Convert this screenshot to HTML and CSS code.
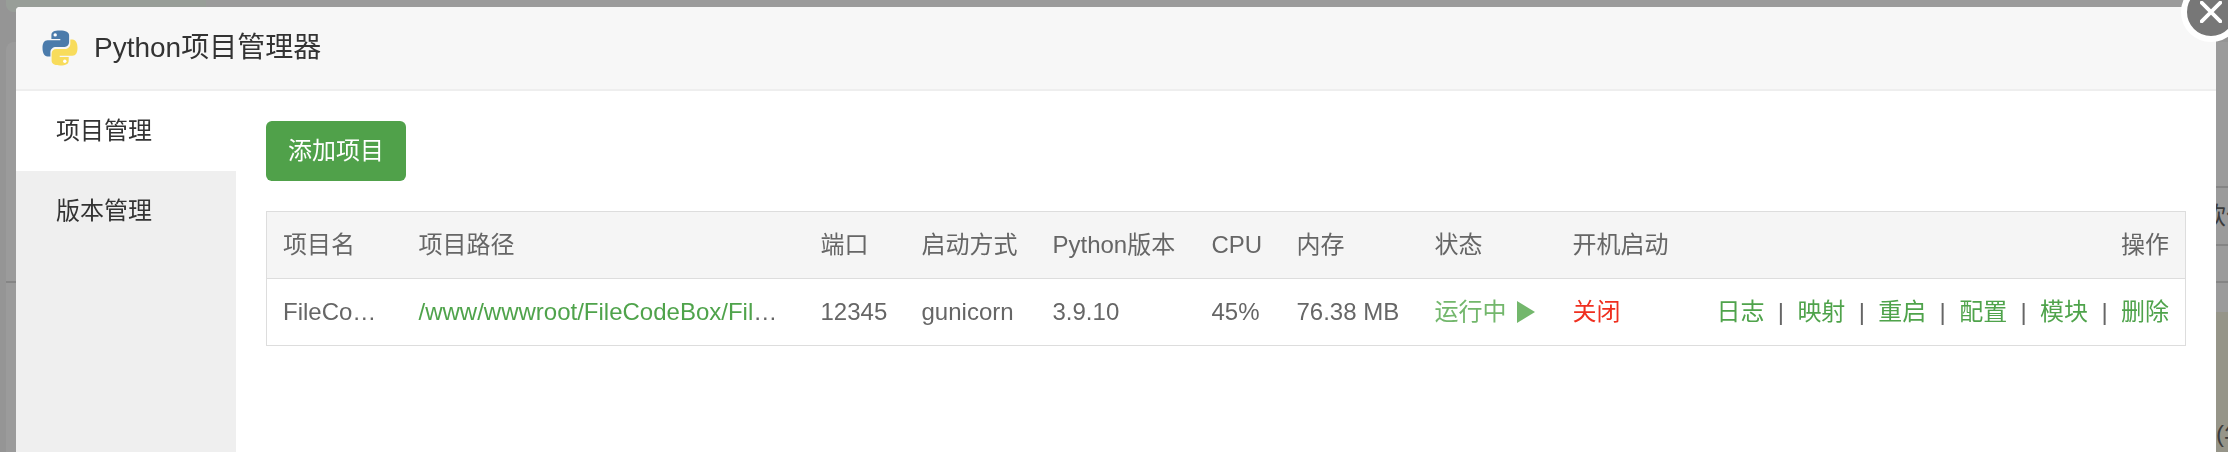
FILE: index.html
```html
<!DOCTYPE html>
<html lang="zh-CN">
<head>
    <meta charset="utf-8">
    <title>Python项目管理器</title>
    <link rel="stylesheet" href="styles.css">
</head>
<body>
    <!-- page behind the mask -->
    <div class="page">
        <div class="search-card"><div class="search-tab"></div></div>
        <div class="soft-card">
            <div class="soft-bar"></div>
            <div class="soft-title">软件</div>
            <div class="soft-gap"></div>
            <div class="soft-head"></div>
            <div class="soft-ad">(年付)</div>
        </div>
    </div>

    <div class="layer" role="dialog" aria-labelledby="layerTitle">
        <div class="layer-title">
            <svg class="logo" viewBox="0 0 36 36" aria-hidden="true">
                <path fill="#4b7bab" d="M17.8 0.6C12 0.6 9.4 2 9.4 5.3V9h8.9v1.3H5.6C2.2 10.3 0.5 13.2 0.5 18s1.7 8.4 5 8.4H8.4V22.2c0-3.3 2.6-5.300 5.700-5.300h8.500c2.600 0 4.500-2 4.500-4.600V5.300C27.100 2.300 24 0.600 17.800 0.600z"/>
                <path fill="#f8dc5c" d="M18.200 35.400c5.800 0 8.500-1.500 8.500-4.700V27h-9v-1.300h12.700c3.400 0 5.100-2.900 5.100-7.700s-1.700-8.400-5-8.400h-2.200v4.200c0 3.200-2.500 5.300-5.600 5.300h-8.500c-2.600 0-4.600 2-4.600 4.600v7C9.600 33.700 12.500 35.400 18.200 35.400z"/>
                <circle cx="13.200" cy="4.900" r="1.700" fill="#fff"/>
                <circle cx="22.800" cy="31.200" r="1.700" fill="#fff"/>
            </svg>
            <span id="layerTitle">Python项目管理器</span>
        </div>
        <button class="layer-close" type="button" aria-label="关闭窗口">
            <svg viewBox="0 0 20 20"><path d="M1.500 1.500l17 17M18.500 1.500l-17 17"/></svg>
        </button>
        <div class="layer-content">
            <nav class="menu">
                <a class="on" href="#">项目管理</a>
                <a href="#">版本管理</a>
            </nav>
            <div class="main">
                <button class="btn-add" type="button">添加项目</button>
                <table class="project-table">
                    <thead>
                        <tr>
                            <th class="col-name">项目名</th>
                            <th class="col-path">项目路径</th>
                            <th class="col-port">端口</th>
                            <th class="col-type">启动方式</th>
                            <th class="col-version">Python版本</th>
                            <th class="col-cpu">CPU</th>
                            <th class="col-memory">内存</th>
                            <th class="col-status">状态</th>
                            <th class="col-boot">开机启动</th>
                            <th class="col-action">操作</th>
                        </tr>
                    </thead>
                    <tbody>
                        <tr>
                            <td class="ellipsis">FileCodeBox</td>
                            <td class="ellipsis"><a href="#">/www/wwwroot/FileCodeBox/FileCodeBox</a></td>
                            <td>12345</td>
                            <td>gunicorn</td>
                            <td>3.9.10</td>
                            <td>45%</td>
                            <td>76.38 MB</td>
                            <td>
                                <a class="running" href="#">运行中
                                    <svg viewBox="0 0 18 22" aria-hidden="true"><path d="M0 0l18 11L0 22z"/></svg>
                                </a>
                            </td>
                            <td><a class="off" href="#">关闭</a></td>
                            <td class="col-action">
                                <a href="#">日志</a>&nbsp; | &nbsp;<a href="#">映射</a>&nbsp; | &nbsp;<a href="#">重启</a>&nbsp; | &nbsp;<a href="#">配置</a>&nbsp; | &nbsp;<a href="#">模块</a>&nbsp; | &nbsp;<a href="#">删除</a>
                            </td>
                        </tr>
                    </tbody>
                </table>
            </div>
        </div>
    </div>
</body>
</html>
```

FILE: styles.css
```css
* {
    box-sizing: border-box;
}
html, body {
    height: 100%;
}
body {
    margin: 0;
    overflow: hidden;
    background-color: #959595;
    color: #666;
    font-family: "Liberation Sans", Arial, "Noto Sans CJK SC", sans-serif;
    font-size: 24px;
    line-height: 36px;
}
a {
    color: #4fa34b;
    text-decoration: none;
}

/* page behind the mask */
.page {
    display: flex;
    flex-direction: column;
    gap: 30px;
    height: 100%;
    padding-left: 6px;
}
.search-card {
    height: 12px;
    background-color: #9b9b9b;
    border-bottom-left-radius: 8px;
    overflow: hidden;
}
.search-tab {
    width: 200px;
    height: 100%;
    background-color: #989e98;
}
.soft-card {
    display: flex;
    flex: 1;
    flex-direction: column;
    background-color: #9b9b9b;
    border-top-left-radius: 8px;
    overflow: hidden;
}
.soft-bar {
    height: 145px;
}
.soft-title,
.soft-gap,
.soft-ad {
    align-self: flex-end;
    color: #3c3c3c;
    white-space: nowrap;
}
.soft-title {
    width: 26px;
    height: 58px;
    border-top: 2px solid #858585;
    line-height: 56px;
}
.soft-gap {
    width: 12px;
    height: 38px;
    border-top: 2px solid #858585;
}
.soft-head {
    height: 31px;
    border-top: 2px solid #858585;
}
.soft-ad {
    flex: 1;
    width: 12px;
    padding-top: 104px;
    background-color: #969589;
}

/* dialog */
.layer {
    position: fixed;
    top: 7px;
    right: 12px;
    bottom: 0;
    left: 16px;
    display: flex;
    flex-direction: column;
    background-color: #fff;
    border-radius: 4px 0 0 0;
}
.layer-title {
    display: flex;
    align-items: center;
    gap: 16px;
    height: 84px;
    padding: 0 26px;
    background-color: #f7f7f7;
    border-bottom: 2px solid #eee;
    border-radius: 4px 0 0 0;
    color: #333;
    font-size: 28px;
}
.logo {
    width: 36px;
    height: 36px;
}
.layer-close {
    position: absolute;
    top: -25px;
    right: -25px;
    display: flex;
    align-items: center;
    justify-content: center;
    width: 60px;
    height: 60px;
    padding: 0;
    background-color: #777;
    border: 6px solid #fff;
    border-radius: 50%;
}
.layer-close svg {
    width: 22px;
    height: 22px;
    fill: none;
    stroke: #fff;
    stroke-width: 3.4;
    stroke-linecap: round;
}
.layer-content {
    display: flex;
    flex: 1;
}
.menu {
    width: 220px;
    background-color: #efefef;
}
.menu a {
    display: block;
    height: 80px;
    padding-left: 40px;
    color: #333;
    line-height: 80px;
}
.menu .on {
    background-color: #fff;
}
.main {
    flex: 1;
    min-width: 0;
    padding: 30px;
}
.btn-add {
    display: block;
    height: 60px;
    margin-bottom: 30px;
    padding: 0 22px;
    background-color: #50a14a;
    border: 0;
    border-radius: 6px;
    color: #fff;
    font: inherit;
}

/* project list */
.project-table {
    width: 100%;
    border: 1px solid #ddd;
    border-collapse: collapse;
    table-layout: fixed;
}
.project-table th,
.project-table td {
    height: 67px;
    padding: 0 16px;
    border-bottom: 1px solid #ddd;
    font-weight: normal;
    text-align: left;
    white-space: nowrap;
}
.project-table th {
    background-color: #f5f5f5;
}
.project-table .ellipsis {
    overflow: hidden;
    text-overflow: ellipsis;
}
.col-name { width: 136px; }
.col-path { width: 402px; }
.col-port { width: 101px; }
.col-type { width: 131px; }
.col-version { width: 159px; }
.col-cpu { width: 85px; }
.col-memory { width: 138px; }
.col-status { width: 138px; }
.col-boot { width: 139px; }
.project-table .col-action {
    text-align: right;
}
.running {
    display: flex;
    align-items: center;
    gap: 10px;
    color: #73b76c;
}
.running svg {
    width: 18px;
    height: 22px;
    fill: #73b76c;
}
.off {
    color: #ef2f1f;
}
```
